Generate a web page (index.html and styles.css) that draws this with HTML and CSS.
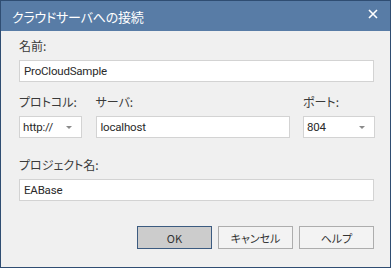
FILE: index.html
```html
<!DOCTYPE html>
<html lang="ja">
<head>
  <meta charset="UTF-8" />
  <title>クラウドサーバへの接続</title>
  <link rel="stylesheet" href="styles.css">
</head>
<body>

  <div class="dialog">
    <div class="title-bar">
      <span class="title">クラウドサーバへの接続</span>
      <span class="close">
        <svg width="10" height="10" viewBox="0 0 10 10">
          <path d="M1 1 L9 9 M9 1 L1 9" stroke="#fff" stroke-width="1.6" fill="none" />
        </svg>
      </span>
    </div>

    <div class="content">
      <label class="label">名前:</label>
      <div class="field">ProCloudSample</div>

      <div class="row">
        <div>
          <label class="label">プロトコル:</label>
          <div class="field select">http://<span class="arrow"></span></div>
        </div>
        <div>
          <label class="label">サーバ:</label>
          <div class="field">localhost</div>
        </div>
        <div>
          <label class="label">ポート:</label>
          <div class="field select">804<span class="arrow"></span></div>
        </div>
      </div>

      <label class="label project">プロジェクト名:</label>
      <div class="field">EABase</div>

      <div class="buttons">
        <button class="btn default">OK</button>
        <button class="btn">キャンセル</button>
        <button class="btn">ヘルプ</button>
      </div>
    </div>
  </div>

</body>
</html>
```

FILE: styles.css
```css
html, body {
  margin: 0;
  padding: 0;
}

body {
  background-color: #f0f0f0;
  font-family: "Noto Sans CJK JP", sans-serif;
  font-feature-settings: "palt";
  color: #333;
}

.dialog {
  width: 391px;
  height: 268px;
  box-sizing: border-box;
  border: 1px solid #2f4d72;
  background-color: #f0f0f0;
}

.title-bar {
  height: 30px;
  background-color: #587ca6;
  display: flex;
  align-items: center;
  justify-content: space-between;
  padding: 0 12px 0 11px;
}

.title {
  color: #fff;
  font-size: 13px;
  letter-spacing: -0.2px;
}

.close {
  display: flex;
  margin-top: -4px;
}

.content {
  padding: 7px 16px 0 18px;
}

.label {
  display: block;
  font-size: 12px;
  line-height: 16px;
  height: 16px;
  margin-bottom: 6px;
  color: #3a3a3a;
}

.field {
  height: 22px;
  box-sizing: border-box;
  border: 1px solid #d3d3d3;
  background-color: #fff;
  font-family: Roboto, "Noto Sans CJK JP", sans-serif;
  font-size: 11.5px;
  letter-spacing: -0.2px;
  line-height: 20px;
  padding: 0 4px;
  color: #2a2a2a;
}

.select {
  display: flex;
  justify-content: space-between;
  align-items: center;
  padding: 0 9px 0 3px;
}

.arrow {
  width: 0;
  height: 0;
  border-left: 3px solid transparent;
  border-right: 3px solid transparent;
  border-top: 3px solid #8a8a8a;
}

.row {
  display: grid;
  grid-template-columns: 63px 194px 72px;
  justify-content: space-between;
  margin-top: 12px;
  margin-right: -1px;
}

.project {
  margin-top: 19px;
}

.buttons {
  display: flex;
  justify-content: flex-end;
  gap: 6px;
  margin-top: 25px;
}

.btn {
  width: 75px;
  height: 23px;
  box-sizing: border-box;
  border: 1px solid #adadad;
  background-color: #f3f3f3;
  font-family: "Noto Sans CJK JP", sans-serif;
  font-feature-settings: "palt";
  font-size: 11px;
  color: #333;
  padding: 0;
}

.btn.default {
  background-color: #cccccc;
  border-color: #3c5b80;
}
```
